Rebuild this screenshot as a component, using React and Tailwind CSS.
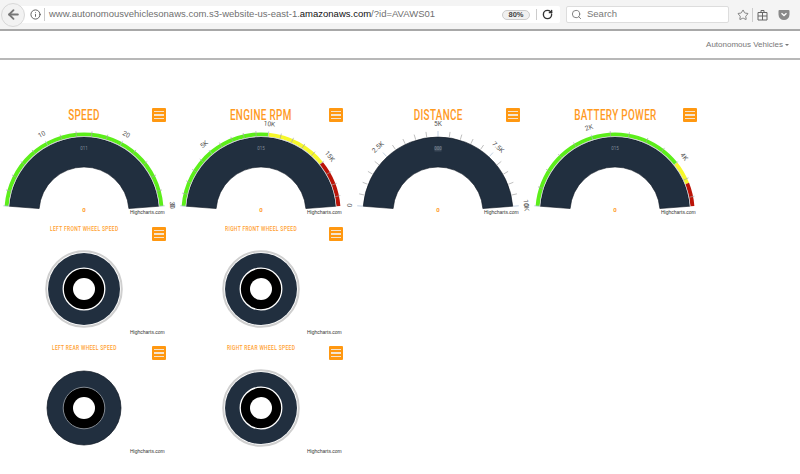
import React from "react";
import { ArrowLeft, Info, RotateCw, Search, Star } from "lucide-react";

const CX = 84;
const CY = 91;
const START = -85.6;
const END = 85.6;
const DARK = "#212f3f";
const GREEN = "#5cee1a";
const YELLOW = "#f6f82a";
const RED = "#bb1408";

const polar = (r, deg, cx = CX, cy = CY) => {
  const rad = (deg * Math.PI) / 180;
  return [cx + r * Math.sin(rad), cy - r * Math.cos(rad)];
};

const arcPath = (r1, r2, a, b) => {
  const [x1, y1] = polar(r2, a);
  const [x2, y2] = polar(r2, b);
  const [x3, y3] = polar(r1, b);
  const [x4, y4] = polar(r1, a);
  return `M${x1} ${y1}A${r2} ${r2} 0 0 1 ${x2} ${y2}L${x3} ${y3}A${r1} ${r1} 0 0 0 ${x4} ${y4}Z`;
};

const gauges = [
  {
    title: "SPEED", max: 30, minor: 2, major: 10, pane: "011",
    bands: [{ from: 0, to: 30, color: GREEN }],
    fmt: (v) => (v === 0 ? "" : `${v}`),
  },
  {
    title: "ENGINE RPM", max: 18800, minor: 1000, major: 5000, pane: "015",
    bands: [
      { from: 0, to: 10000, color: GREEN },
      { from: 10000, to: 15000, color: YELLOW },
      { from: 15000, to: 18800, color: RED },
    ],
    fmt: (v) => (v === 0 ? "0" : `${v / 1000}K`),
  },
  {
    title: "DISTANCE", max: 10000, minor: 500, major: 2500, pane: "000", paneBox: true,
    bands: [],
    fmt: (v) => (v === 0 ? "0" : `${v / 1000}K`),
  },
  {
    title: "BATTERY POWER", max: 5000, minor: 400, major: 2000, pane: "015",
    bands: [
      { from: 0, to: 4000, color: GREEN },
      { from: 4000, to: 4500, color: YELLOW },
      { from: 4500, to: 5000, color: RED },
    ],
    fmt: (v) => (v === 0 ? "0" : `${v / 1000}K`),
  },
];

function MenuButton({ top }) {
  return (
    <div className={`absolute left-[152px] ${top} flex h-[14px] w-[14px] flex-col justify-center gap-[2px] rounded-[1px] bg-[#ff9811] px-[2px]`}>
      <div className="h-[1.5px] bg-[#f4e4d0]" />
      <div className="h-[1.5px] bg-[#f4e4d0]" />
      <div className="h-[1.5px] bg-[#f4e4d0]" />
    </div>
  );
}

function Credit({ top }) {
  return (
    <div className={`absolute left-[130px] ${top} whitespace-nowrap font-['Liberation_Sans',sans-serif] text-[5px] leading-[6px] text-[#333]`}>
      Highcharts.com
    </div>
  );
}

function Gauge({ g }) {
  const angle = (v) => START + (v / g.max) * (END - START);
  const ticks = [];
  for (let v = 0; v <= g.max; v += g.minor) ticks.push(v);
  const labels = [];
  for (let v = 0; v <= g.max; v += g.major) labels.push(v);

  return (
    <div className="relative h-[115px]">
      <div className="flex h-[14px] w-[168px] items-center justify-center pt-[2px]">
        <span className="inline-block scale-x-[0.66] whitespace-nowrap font-['Roboto',sans-serif] text-[15px] leading-[14px] font-medium tracking-[0.5px] text-[#ff9a1f]">
          {g.title}
        </span>
      </div>
      <MenuButton top="top-px" />
      <svg width="177" height="101" className="overflow-visible">
        {g.bands.map((b) => (
          <path key={b.from} d={arcPath(75.6, 79.6, angle(b.from), angle(b.to))} fill={b.color} />
        ))}
        <path d={arcPath(45, 75, START, END)} fill={DARK} stroke="#0d1621" strokeWidth="0.6" />
        {g.bands.length > 0 && (
          <path d={arcPath(75, 75.7, START, END)} fill="#d5d8dc" />
        )}
        {ticks.map((v) => {
          const [x1, y1] = polar(75.5, angle(v));
          const [x2, y2] = polar(81, angle(v));
          return <line key={v} x1={x1} y1={y1} x2={x2} y2={y2} stroke={v % g.major === 0 ? "#a9bdd6" : "#a3a3a3"} strokeWidth="0.7" />;
        })}
        {labels.map((v) => {
          const a = angle(v);
          const [x, y] = polar(88, a);
          return (
            <text key={v} x={x} y={y} textAnchor="middle" dominantBaseline="middle" fontSize="6.6" fill="#555" fontFamily="Roboto, sans-serif" transform={`rotate(${a} ${x} ${y})`}>
              {g.fmt(v)}
            </text>
          );
        })}
        {g.paneBox && <rect x={CX - 3.5} y="25.5" width="7" height="5" fill="#3b4858" />}
        <text x={CX} y="28" textAnchor="middle" dominantBaseline="middle" fontSize="4.5" fill="#7e8a98" fontFamily="Roboto, sans-serif">
          {g.pane}
        </text>
        <text x={CX} y="89" textAnchor="middle" dominantBaseline="middle" fontSize="6" fontWeight="700" fill="#ff9a1f" fontFamily="Roboto, sans-serif">
          0
        </text>
      </svg>
      <Credit top="top-[102px]" />
    </div>
  );
}

function Wheel({ title, plain }) {
  return (
    <div className="relative h-[119px]">
      <div className="flex h-[14px] w-[168px] items-start justify-center">
        <span className="inline-block scale-x-[0.62] whitespace-nowrap font-['Roboto',sans-serif] text-[8px] leading-[14px] font-medium tracking-[0.5px] text-[#ff9f30]">
          {title}
        </span>
      </div>
      <MenuButton top="top-[5px]" />
      <svg width="168" height="105">
        {plain ? (
          <circle cx={CX} cy="53" r="37" fill={DARK} stroke="#0d1621" strokeWidth="0.7" />
        ) : (
          <>
            <circle cx={CX} cy="53" r="37.8" fill="none" stroke="#cfcfcf" strokeWidth="2" />
            <circle cx={CX} cy="53" r="36" fill={DARK} />
          </>
        )}
        <circle cx={CX} cy="53" r="20.8" fill="#000" stroke={plain ? "#8d949c" : "#fff"} strokeWidth={plain ? 0.9 : 1.3} />
        <circle cx={CX} cy="53" r="11" fill="#fff" />
      </svg>
      <Credit top="top-[107px]" />
    </div>
  );
}

function BrowserBar() {
  return (
    <div className="flex h-[31px] items-center border-b-2 border-[#a8a8a8] bg-[#f4f4f4]">
      <div className="z-10 -mr-[6px] ml-px flex h-[24px] w-[24px] shrink-0 items-center justify-center rounded-full border border-[#d8d8d8] bg-[#f2f2f2]">
        <ArrowLeft size={15} strokeWidth={3} className="text-[#777]" />
      </div>
      <div className="flex h-[17px] w-[541px] items-center rounded-[2px] bg-white pl-[11px] font-['Liberation_Sans',sans-serif]">
        <Info size={11} className="shrink-0 text-[#555]" />
        <div className="ml-[3px] h-[13px] w-px bg-[#ccc]" />
        <div className="ml-[4px] whitespace-nowrap text-[9.5px] text-[#6f6f6f]">
          www.autonomousvehiclesonaws.com.s3-website-us-east-1.<span className="text-[#111]">amazonaws.com</span>/?id=AVAWS01
        </div>
        <div className="ml-auto flex h-[10px] w-[28px] items-center justify-center rounded-full border border-[#ccc] bg-[#f0f0f0] text-[7.5px] font-bold text-[#444]">
          80%
        </div>
        <div className="ml-[6px] h-[11px] w-px bg-[#ccc]" />
        <RotateCw size={11} strokeWidth={3} className="mr-[7px] ml-[5px] text-[#333]" />
      </div>
      <div className="ml-[6px] flex h-[17px] w-[163px] items-center gap-[5px] rounded-[2px] border border-[#ddd] bg-white pl-[4px] font-['Liberation_Sans',sans-serif] text-[9.5px] text-[#777]">
        <Search size={11} className="text-[#777]" />
        Search
      </div>
      <Star size={12} strokeWidth={1.6} className="ml-[8px] text-[#666]" />
      <div className="ml-[3px] h-[14px] w-px bg-[#ccc]" />
      <svg width="11" height="12" viewBox="0 0 11 12" className="ml-[4px]">
        <path d="M1 3.5h9v7.5h-9zM4 3.5v-2h3v2M1 7h9M5.5 3.5v7.5" fill="none" stroke="#666" strokeWidth="1" />
      </svg>
      <svg width="12" height="11" viewBox="0 0 12 11" className="ml-[10px]">
        <path d="M1.5 1h9a1 1 0 0 1 1 1v3.5a5.5 5.5 0 0 1-11 0v-3.500a1 1 0 0 1 1-1z" fill="#8a8a8a" />
        <path d="M3.500 4.200l2.500 2.300l2.500-2.300" fill="none" stroke="#fff" strokeWidth="1.300" />
      </svg>
    </div>
  );
}

export default function App() {
  return (
    <div className="h-[474px] w-[800px] overflow-hidden bg-white">
      <BrowserBar />
      <div className="flex h-[29px] items-center justify-end border-b-2 border-[#b8b8b8] pr-[11px] font-['Liberation_Sans',sans-serif] text-[8px] text-[#777]">
        Autonomous Vehicles
        <div className="ml-[2px] h-0 w-0 border-x-[2px] border-t-[2px] border-x-transparent border-t-[#777]" />
      </div>
      <div className="grid grid-cols-[repeat(4,177px)] pt-[47px]">
        {gauges.map((g) => (
          <Gauge key={g.title} g={g} />
        ))}
        <Wheel title="LEFT FRONT WHEEL SPEED" />
        <Wheel title="RIGHT FRONT WHEEL SPEED" />
        <div className="col-span-2" />
        <Wheel title="LEFT REAR WHEEL SPEED" plain />
        <Wheel title="RIGHT REAR WHEEL SPEED" />
      </div>
    </div>
  );
}
